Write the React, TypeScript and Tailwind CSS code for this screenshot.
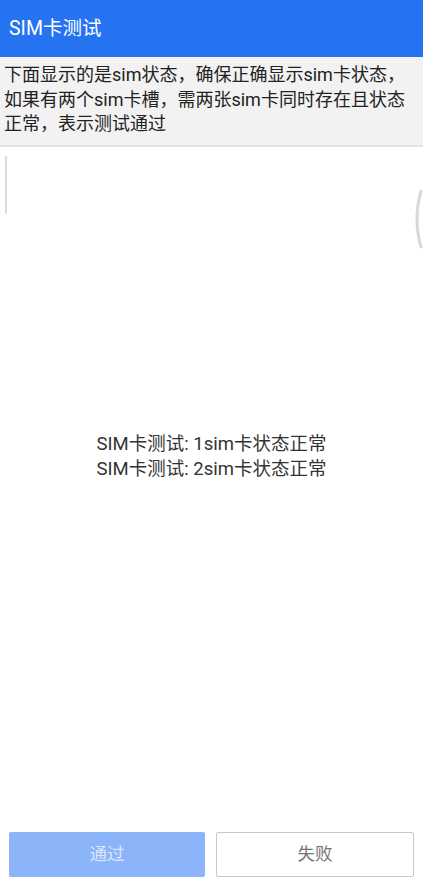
import React from 'react'

const font = { fontFamily: 'Roboto, "Noto Sans CJK SC", sans-serif' }

export default function App() {
  return (
    <div className="flex h-[884px] w-full flex-col bg-white" style={font}>
      {/* Title bar */}
      <div className="flex h-[57px] items-center bg-[#2673f2] px-[9px]">
        <h1 className="text-[19.5px] font-normal text-white">SIM卡测试</h1>
      </div>

      {/* Description */}
      <div className="border-b-2 border-[#e2e2e2] bg-[#f2f2f2] px-[4px] pt-[6px] pb-[8px]">
        <p className="text-[18px] leading-[24.5px] text-[#222]">
          下面显示的是sim状态，确保正确显示sim卡状态，如果有两个sim卡槽，需两张sim卡同时存在且状态正常，表示测试通过
        </p>
      </div>

      {/* Content */}
      <div className="relative flex-1">
        <div className="absolute left-[5px] top-[9px] h-[58px] w-[2px] rounded bg-[#dcdcdc]" />
        <svg className="absolute right-0 top-[42px]" width="12" height="60" viewBox="0 0 12 60">
          <path d="M10 2 Q2 30 10 58" fill="none" stroke="#d8d8d8" strokeWidth="3" strokeLinecap="round" />
        </svg>
        <div className="flex justify-center pt-[285px]">
          <div className="text-[18.5px] leading-[25px] text-[#333]">
            <p>SIM卡测试: 1sim卡状态正常</p>
            <p>SIM卡测试: 2sim卡状态正常</p>
          </div>
        </div>
      </div>

      {/* Buttons */}
      <div className="flex gap-[11px] px-[9px] pb-[7px]">
        <button className="h-[45px] flex-1 rounded-[2px] bg-[#8cb4f8] text-[17.5px] text-[#dbe7fd]">通过</button>
        <button className="h-[45px] flex-1 rounded-[2px] border border-[#c8c8c8] bg-white text-[17.5px] text-[#777]">失败</button>
      </div>
    </div>
  )
}
